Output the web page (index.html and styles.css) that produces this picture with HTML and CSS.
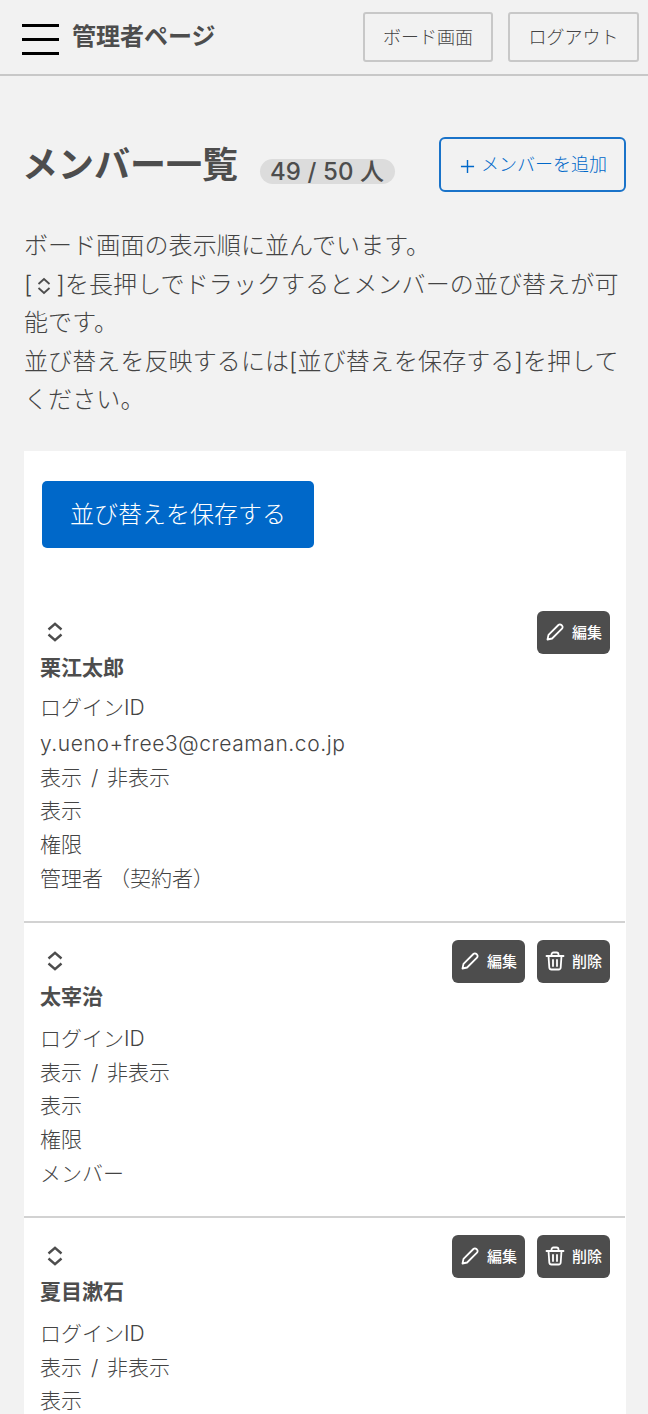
FILE: index.html
```html
<!DOCTYPE html>
<html lang="ja">
<head>
<meta charset="utf-8">
<title>メンバー一覧</title>
<link rel="stylesheet" href="styles.css">
</head>
<body>
<header class="header">
  <div class="burger"><span></span><span></span><span></span></div>
  <div class="site-title">管理者ページ</div>
  <a class="head-btn btn-board">ボード画面</a>
  <a class="head-btn btn-logout">ログアウト</a>
</header>
<main class="main">
  <div class="title-row">
    <h1 class="title">メンバー一覧</h1>
    <span class="count">49 / 50 人</span>
    <a class="add-btn"><svg class="plus" viewBox="0 0 16 16"><path d="M8 1v14M1 8h14"/></svg>メンバーを追加</a>
  </div>
  <p class="desc">ボード画面の表示順に並んでいます。<br>[<svg class="mini-sort" viewBox="0 0 18 20"><path d="M3.500 8L9 3l5.500 5M3.500 12L9 17l5.500-5"/></svg>]を長押しでドラックするとメンバーの並び替えが可能です。<br>並び替えを反映するには[並び替えを保存する]を押してください。</p>
  <section class="card">
    <div class="save-wrap"><button class="save-btn">並び替えを保存する</button></div>
    <article class="member first">
      <div class="actions">
        <a class="act"><svg class="ico" viewBox="0 0 20 20"><path d="M2.500 17.500l1-4.600L13.400 3a2.100 2.100 0 0 1 3 0l.6.6a2.100 2.100 0 0 1 0 3L7.100 16.500z"/></svg>編集</a>
      </div>
      <svg class="sort" viewBox="0 0 18 20"><path d="M2.500 7.500L9 1.800l6.500 5.700M2.500 12.500L9 18.200l6.500-5.700"/></svg>
      <div class="name">栗江太郎</div>
      <div class="label first-label">ログインID</div>
      <div class="label mail">y.ueno+free3@creaman.co.jp</div>
      <div class="label vis">表示 / 非表示</div>
      <div class="label">表示</div>
      <div class="label">権限</div>
      <div class="label">管理者 （契約者）</div>
    </article>
    <article class="member">
      <div class="actions">
        <a class="act"><svg class="ico" viewBox="0 0 20 20"><path d="M2.500 17.500l1-4.600L13.400 3a2.100 2.100 0 0 1 3 0l.6.6a2.100 2.100 0 0 1 0 3L7.100 16.500z"/></svg>編集</a>
        <a class="act"><svg class="ico" viewBox="0 0 20 20"><path d="M1.500 5h17M6.500 5V3.500A2 2 0 0 1 8.500 1.500h3a2 2 0 0 1 2 2V5M3.500 5l.8 11.500a2.200 2.200 0 0 0 2.200 2h7a2.200 2.200 0 0 0 2.200-2L16.500 5M8 9v6M12 9v6"/></svg>削除</a>
      </div>
      <svg class="sort" viewBox="0 0 18 20"><path d="M2.500 7.500L9 1.800l6.500 5.700M2.500 12.500L9 18.200l6.500-5.700"/></svg>
      <div class="name">太宰治</div>
      <div class="label first-label">ログインID</div>
      <div class="label vis">表示 / 非表示</div>
      <div class="label">表示</div>
      <div class="label">権限</div>
      <div class="label">メンバー</div>
    </article>
    <article class="member">
      <div class="actions">
        <a class="act"><svg class="ico" viewBox="0 0 20 20"><path d="M2.500 17.500l1-4.600L13.400 3a2.100 2.100 0 0 1 3 0l.6.6a2.100 2.100 0 0 1 0 3L7.100 16.500z"/></svg>編集</a>
        <a class="act"><svg class="ico" viewBox="0 0 20 20"><path d="M1.500 5h17M6.500 5V3.500A2 2 0 0 1 8.500 1.500h3a2 2 0 0 1 2 2V5M3.500 5l.8 11.500a2.200 2.200 0 0 0 2.200 2h7a2.200 2.200 0 0 0 2.200-2L16.500 5M8 9v6M12 9v6"/></svg>削除</a>
      </div>
      <svg class="sort" viewBox="0 0 18 20"><path d="M2.500 7.500L9 1.800l6.500 5.700M2.500 12.500L9 18.200l6.500-5.700"/></svg>
      <div class="name">夏目漱石</div>
      <div class="label first-label">ログインID</div>
      <div class="label vis">表示 / 非表示</div>
      <div class="label">表示</div>
    </article>
  </section>
</main>
</body>
</html>
```
FILE: styles.css
```css
* { box-sizing: border-box; }
html, body { margin: 0; height: 1414px; overflow: hidden; }
body {
  background: #f2f2f2;
  color: #444;
  font-family: Inter, "Noto Sans CJK JP", sans-serif;
  font-weight: 300;
}
.header {
  height: 76px;
  display: flex;
  align-items: flex-start;
  border-bottom: 2px solid #c8c8c8;
  padding-top: 12px;
}
.burger {
  width: 37px;
  margin: 12px 0 0 22px;
  display: flex;
  flex-direction: column;
  gap: 11px;
}
.burger span { display: block; height: 3px; background: #000; }
.site-title {
  margin: 9px 0 0 13px;
  font-size: 24px;
  line-height: 32px;
  font-weight: 700;
  color: #4d4d4d;
  flex: 1;
}
.head-btn {
  height: 50px;
  border: 2px solid #c8c8c8;
  border-radius: 3px;
  font-size: 18px;
  line-height: 48px;
  text-align: center;
}
.btn-board { width: 130px; margin-right: 15px; }
.btn-logout { width: 131px; margin-right: 9px; }
.main { padding: 0 22px 0 24px; }
.title-row {
  display: flex;
  align-items: flex-start;
  padding-top: 61px;
  height: 134px;
}
.title {
  margin: 8px 0 0 -2px;
  font-size: 36px;
  line-height: 40px;
  font-weight: 700;
  color: #4d4d4d;
  white-space: nowrap;
}
.count {
  margin: 22px 0 0 22px;
  height: 25px;
  line-height: 26px;
  padding: 0 11px 0 10px;
  border-radius: 13px;
  background: #dcdcdc;
  color: #4d4d4d;
  font-size: 24px;
  letter-spacing: .1px;
  font-weight: 500;
  white-space: nowrap;
}
.add-btn {
  margin-left: auto;
  width: 187px;
  height: 55px;
  border: 2px solid #1a73c9;
  border-radius: 6px;
  color: #0068c9;
  font-size: 18px;
  display: flex;
  align-items: center;
  justify-content: center;
  gap: 6px;
  padding: 0 0 4px 2px;
  white-space: nowrap;
}
.plus {
  width: 15px;
  height: 15px;
  margin-top: 7px;
  fill: none;
  stroke: #0068c9;
  stroke-width: 1.500;
}
.desc {
  margin: 17px 0 31px;
  font-size: 24px;
  line-height: 38.600px;
  letter-spacing: .1px;
}
.mini-sort {
  width: 18px;
  height: 20px;
  margin: 0 3px 0 3px;
  vertical-align: -3px;
  fill: none;
  stroke: #4d4d4d;
  stroke-width: 1.800;
}
.card { background: #fff; padding: 30px 0 0; height: 1000px; }
.save-wrap { padding: 0 18px; margin-bottom: 63px; }
.save-btn {
  display: block;
  width: 272px;
  height: 67px;
  border: 0;
  border-radius: 5px;
  background: #0068c9;
  color: #fff;
  font: inherit;
  font-size: 24px;
  padding: 0 0 3px;
}
.member {
  display: flow-root;
  position: relative;
  margin-right: 1px;
  padding: 17px 16px 25px;
  border-top: 2px solid #d2d2d2;
}
.member.first { border-top: 0; padding-top: 0; padding-bottom: 25px; }
.actions {
  position: absolute;
  top: 17px;
  right: 15px;
  display: flex;
  gap: 12px;
}
.member.first .actions { top: 0; }
.act {
  width: 73px;
  height: 43px;
  background: #4d4d4d;
  color: #fff;
  border-radius: 6px;
  font-size: 15px;
  font-weight: 500;
  display: flex;
  align-items: center;
  justify-content: center;
  gap: 7px;
  padding: 0 0 2px;
}
.ico {
  width: 20px;
  height: 20px;
  margin-top: 2px;
  fill: none;
  stroke: #fff;
  stroke-width: 1.800;
  stroke-linejoin: round;
  stroke-linecap: round;
}
.sort {
  display: block;
  width: 18px;
  height: 20px;
  margin: 11px 0 0 6px;
  fill: none;
  stroke: #4d4d4d;
  stroke-width: 2.400;
}
.name { font-size: 21px; font-weight: 700; line-height: 30px; margin-top: 11px; color: #4d4d4d; }
.label { font-size: 21px; line-height: 33.800px; white-space: nowrap; }
.first-label { margin-top: 10px; }
.first .first-label { margin-top: 8px; }
.mail { margin-top: 2px; letter-spacing: .58px; }
.vis { word-spacing: 3px; }
```
